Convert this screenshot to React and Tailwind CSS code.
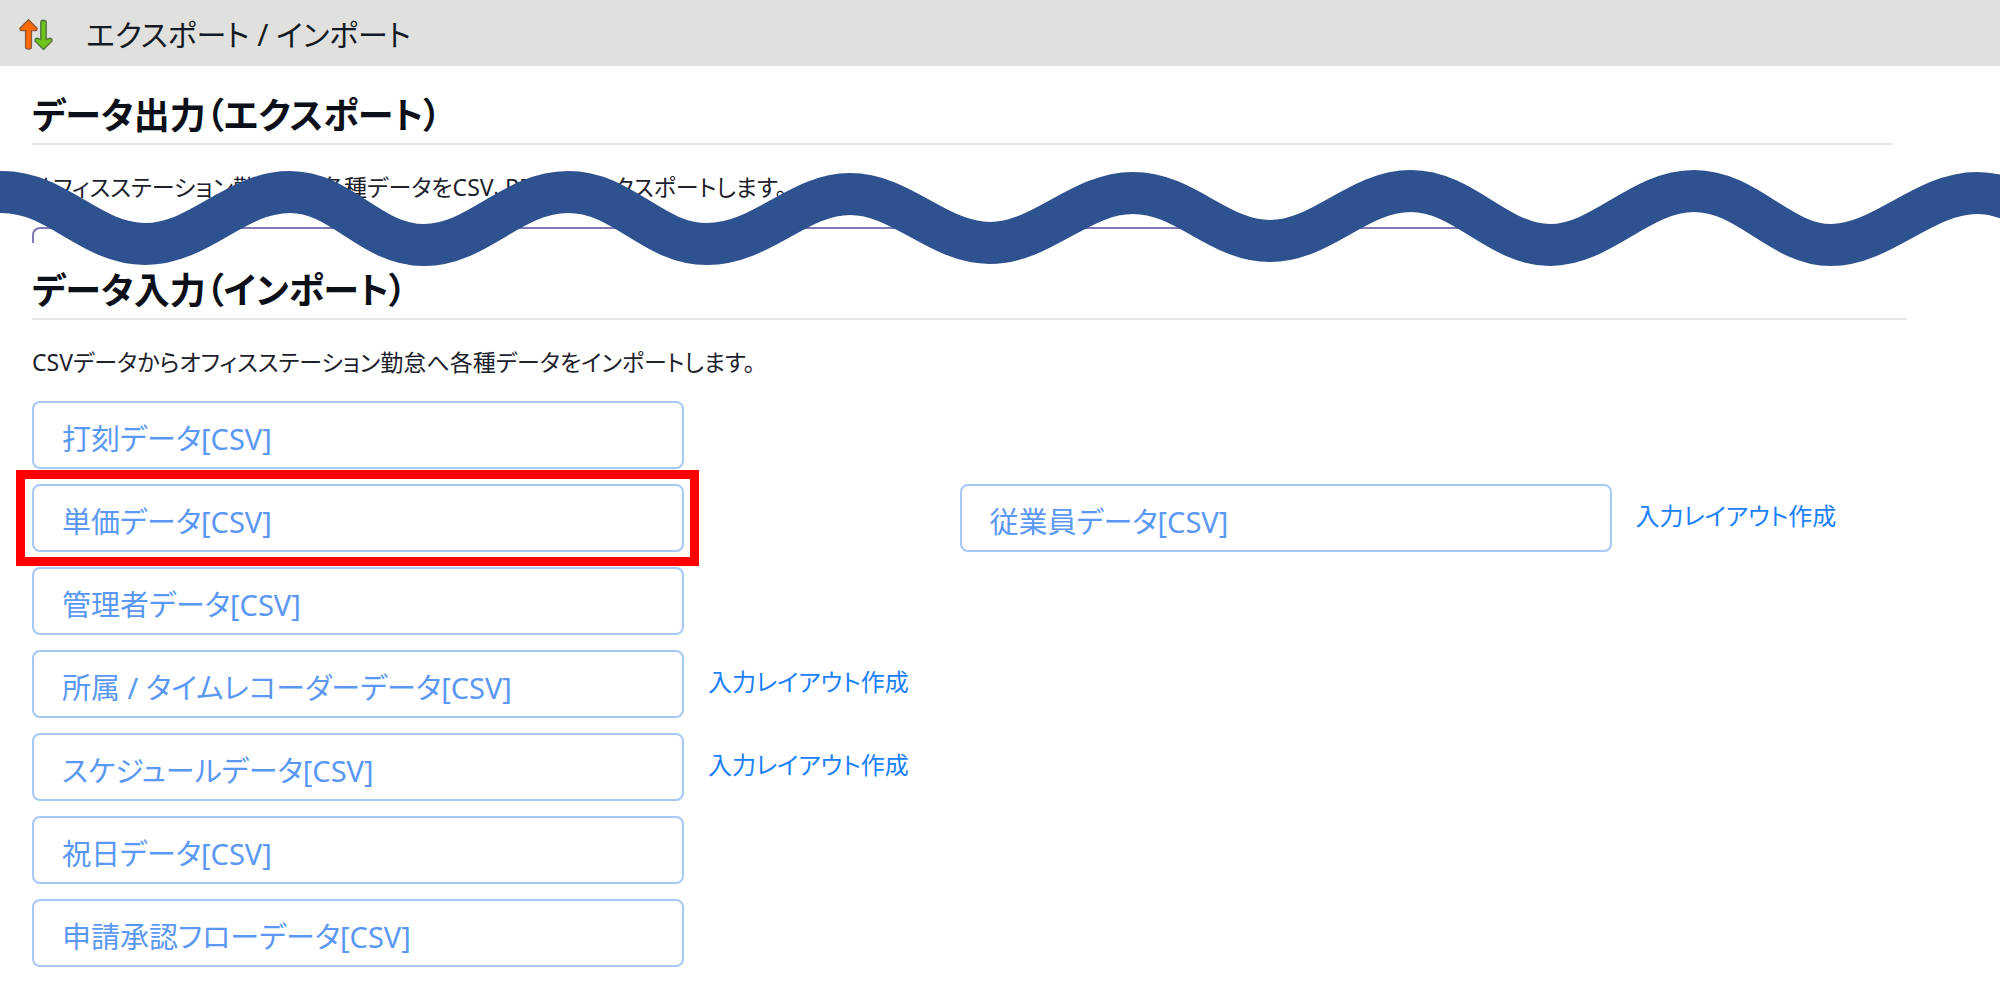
import React from 'react';

const importRows = [
  { label: '打刻データ[CSV]' },
  { label: '単価データ[CSV]', highlighted: true, side: { label: '従業員データ[CSV]', layout: true } },
  { label: '管理者データ[CSV]' },
  { label: '所属 / タイムレコーダーデータ[CSV]', layout: true },
  { label: 'スケジュールデータ[CSV]', layout: true },
  { label: '祝日データ[CSV]' },
  { label: '申請承認フローデータ[CSV]' },
];

function TransferIcon() {
  return (
    <svg viewBox="0 0 36 34" className="h-[34px] w-9 shrink-0" aria-hidden="true">
      <g strokeWidth="1.4" strokeLinejoin="round" strokeLinecap="round">
        <path
          d="M10.5 1.8 L19 10.2 Q19.4 12.6 17 12.6 H13.4 V29 Q13.4 31 10.5 31 Q7.6 31 7.6 29 V12.6 H4 Q1.6 12.6 2 10.2 Z"
          fill="#ff6a00"
          stroke="#8f5a3c"
        />
        <path
          d="M25.5 31.5 L34 23 Q34.4 20.5 31.5 20.3 L28.2 21.5 V4.5 Q28.2 2.3 25.5 2.3 Q22.8 2.3 22.8 4.5 V21.5 L19.5 20.3 Q16.6 20.5 17 23 Z"
          fill="#6cc41c"
          stroke="#55753f"
        />
      </g>
    </svg>
  );
}

function Wave() {
  return (
    <svg
      viewBox="0 0 2000 100"
      preserveAspectRatio="none"
      className="pointer-events-none absolute inset-x-0 top-[102px] h-[100px] w-full"
      aria-hidden="true"
    >
      <path
        d="M-140 76 C-90 76 -58 24 2 24 C58 24 90 76 145 76 C200 76 235 24 290 24 C342 24 370 77 424 77 C478 77 512 24 568 24 C624 24 652 76 707 76 C762 76 798 26 850 26 C902 26 938 75 990 75 C1042 75 1080 25 1133 25 C1186 25 1218 73 1270 73 C1322 73 1358 23 1411 23 C1464 23 1498 77 1550 77 C1602 77 1640 23 1694 23 C1748 23 1780 77 1831 77 C1882 77 1924 25 1977 25 C2030 25 2060 76 2110 76"
        fill="none"
        stroke="#2e528f"
        strokeWidth="42"
      />
    </svg>
  );
}

function SectionTitle({ children }) {
  return (
    <h2 className="border-b-2 border-[#e4e4e4] pb-[7px] text-[36px] leading-10 font-bold text-[#0a0f18]">
      {children}
    </h2>
  );
}

function ImportItem({ label, layout, highlighted }) {
  return (
    <div className="relative flex items-center gap-6">
      <button
        type="button"
        className="h-[68px] w-[652px] max-w-[71%] rounded-lg border-2 border-[#a6c8f6] bg-white pt-2 pl-7 text-left text-[29px] leading-10 whitespace-nowrap text-[#5a98f3]"
      >
        {label}
      </button>
      {layout && (
        <a href="#layout" className="pb-1 text-[24px] leading-8 whitespace-nowrap text-[#1a80fb]">
          入力レイアウト作成
        </a>
      )}
      {highlighted && (
        <span className="pointer-events-none absolute -inset-y-[14px] -left-4 w-[683px] border-[9px] border-[#fe0000]" />
      )}
    </div>
  );
}

export default function App() {
  return (
    <div
      className="min-h-screen bg-white text-[#1c222b] [font-feature-settings:'palt']"
      style={{ fontFamily: '"Noto Sans", "Noto Sans CJK JP", sans-serif' }}
    >
      <header className="flex h-[66px] items-center gap-8 bg-[#e0e0de] pt-1 pl-[18px]">
        <TransferIcon />
        <h1 className="text-[30px] leading-10 text-[#151b24]">エクスポート / インポート</h1>
      </header>

      <main className="relative">
        {/* Export */}
        <section className="pt-[30px] pr-[108px] pl-8">
          <SectionTitle>データ出力（エクスポート）</SectionTitle>
          <p className="mt-6 text-[23px] leading-9">
            オフィスステーション勤怠から各種データをCSV、PDFにてエクスポートします。
          </p>
          <div className="mt-[22px] h-4 w-4/5 rounded-tl-lg border-t-2 border-l-2 border-[#7d79b5]" />
        </section>

        <Wave />

        {/* Import */}
        <section className="pt-7 pr-[93px] pb-4 pl-8">
          <SectionTitle>データ入力（インポート）</SectionTitle>
          <p className="mt-6 text-[23px] leading-9">
            CSVデータからオフィスステーション勤怠へ各種データをインポートします。
          </p>
          <div className="mt-[21px] mr-5 flex flex-col gap-[15px]">
            {importRows.map((row) => (
              <div key={row.label} className="grid grid-cols-2">
                <ImportItem label={row.label} layout={row.layout} highlighted={row.highlighted} />
                {row.side && <ImportItem label={row.side.label} layout={row.side.layout} />}
              </div>
            ))}
          </div>
        </section>
      </main>
    </div>
  );
}
